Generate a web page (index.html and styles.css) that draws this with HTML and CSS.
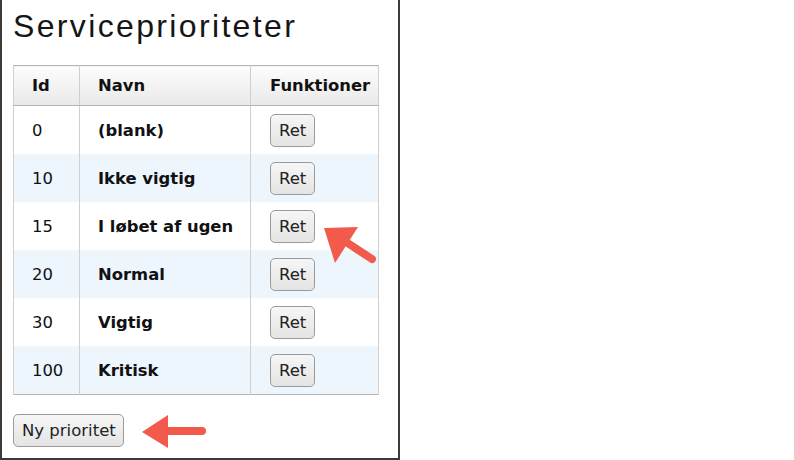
FILE: index.html
```html
<!DOCTYPE html>
<html lang="da">
<head>
<meta charset="utf-8">
<title>Serviceprioriteter</title>
<link rel="stylesheet" href="styles.css">
</head>
<body>
<div class="panel">
  <h1 class="title">Serviceprioriteter</h1>
  <table class="grid">
    <thead>
      <tr><th class="c-id">Id</th><th class="c-name">Navn</th><th class="c-fn">Funktioner</th></tr>
    </thead>
    <tbody>
      <tr><td>0</td><td class="name">(blank)</td><td class="fn"><button class="btn">Ret</button></td></tr>
      <tr class="alt"><td>10</td><td class="name">Ikke vigtig</td><td class="fn"><button class="btn">Ret</button></td></tr>
      <tr><td>15</td><td class="name">I løbet af ugen</td><td class="fn"><button class="btn">Ret</button></td></tr>
      <tr class="alt"><td>20</td><td class="name">Normal</td><td class="fn"><button class="btn">Ret</button></td></tr>
      <tr><td>30</td><td class="name">Vigtig</td><td class="fn"><button class="btn">Ret</button></td></tr>
      <tr class="alt"><td>100</td><td class="name">Kritisk</td><td class="fn"><button class="btn">Ret</button></td></tr>
    </tbody>
  </table>
  <div class="actions"><button class="btn btn-new">Ny prioritet</button></div>
</div>
<svg class="arrow arrow-ret" width="60" height="48" viewBox="320 218 60 48" aria-hidden="true">
  <line x1="343" y1="240" x2="372" y2="259" stroke="#f25a4c" stroke-width="8" stroke-linecap="round"/>
  <polygon points="324,228 358,227 335,263" fill="#f25a4c"/>
</svg>
<svg class="arrow arrow-new" width="70" height="40" viewBox="138 412 70 40" aria-hidden="true">
  <line x1="160" y1="431" x2="202" y2="431" stroke="#f25a4c" stroke-width="8" stroke-linecap="round"/>
  <polygon points="142,432 168,415 168,448" fill="#f25a4c"/>
</svg>
</body>
</html>
```
FILE: styles.css
```css
html, body {
  margin: 0;
  padding: 0;
  background: #fff;
}
body {
  width: 794px;
  height: 460px;
  overflow: hidden;
  position: relative;
  font-family: "DejaVu Sans", Verdana, sans-serif;
  color: #111;
}
.panel {
  box-sizing: border-box;
  width: 400px;
  height: 460px;
  border-left: 2px solid #3a3a3a;
  border-right: 2px solid #3a3a3a;
  border-bottom: 2px solid #3a3a3a;
  padding: 8px 0 0 11px;
}
.title {
  margin: 0 0 20px 0;
  font-family: "Liberation Sans", Arial, sans-serif;
  font-weight: normal;
  font-size: 32px;
  line-height: normal;
  letter-spacing: 2.35px;
  color: #151515;
}
.grid {
  border-collapse: collapse;
  width: 366px;
  border: 1px solid #b4b4b4;
  font-size: 16.4px;
}
.grid th, .grid td {
  text-align: left;
  vertical-align: middle;
  padding: 0 0 0 18px;
  border-left: 1px solid #cfcfcf;
  border-right: 1px solid #cfcfcf;
}
.grid th.c-fn, .grid td.fn {
  padding-left: 19px;
}
.grid th {
  height: 39px;
  font-weight: bold;
  background: linear-gradient(#fdfdfd, #e9e9e9);
  border-bottom: 1px solid #b4b4b4;
}
.c-id { width: 47px; }
.c-name { width: 152px; }
.grid td {
  height: 48px;
}
.grid td.name {
  font-weight: bold;
}
.grid tr.alt td {
  background: #edf5fd;
}
.btn {
  font-family: "DejaVu Sans", Verdana, sans-serif;
  font-size: 16.5px;
  color: #222;
  height: 33px;
  padding: 0 8px;
  border: 1px solid #9a9a9a;
  border-radius: 5px;
  background: linear-gradient(#f6f6f6, #e4e4e4);
}
.actions {
  padding-top: 19px;
}
.btn-new {
  padding: 0 7px 0 8px;
}
.arrow {
  position: absolute;
}
.arrow-ret { left: 320px; top: 218px; }
.arrow-new { left: 138px; top: 412px; }
```
